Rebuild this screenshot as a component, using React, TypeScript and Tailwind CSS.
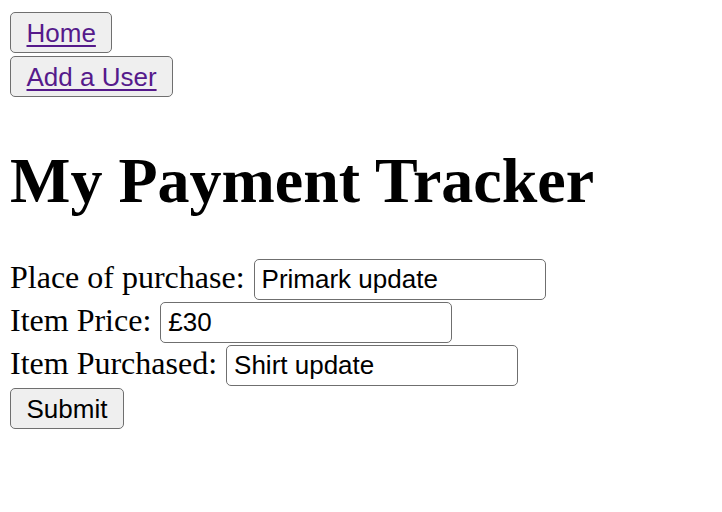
import React from "react";

const serif = { fontFamily: '"Liberation Serif", "Times New Roman", serif' };

function NavButton({ label }: { label: string }) {
  return (
    <button
      type="button"
      className="h-[41px] px-[15.5px] bg-[#efefef] border border-[#6f6f6f] rounded-[5px] text-[26px] leading-none font-['Liberation_Sans',Arial,sans-serif]"
    >
      <a href="#" className="text-[#551a8b] underline decoration-[2px] underline-offset-[3px]">
        {label}
      </a>
    </button>
  );
}

function Field({ label, value }: { label: string; value: string }) {
  return (
    <div className="flex items-center h-[41px]">
      <span className="text-[32px] leading-[32px] text-black whitespace-pre translate-y-[-3px]" style={serif}>
        {label}
      </span>
      <input
        type="text"
        defaultValue={value}
        className="ml-[9px] w-[292px] h-[41px] px-[7px] bg-white border border-[#6f6f6f] rounded-[5px] text-[26px] text-black font-['Liberation_Sans',Arial,sans-serif] outline-none"
      />
    </div>
  );
}

export default function App() {
  return (
    <div className="w-[722px] h-[512px] bg-white px-[10px] pt-[12px]">
      <div className="flex flex-col items-start gap-[3px]">
        <NavButton label="Home" />
        <NavButton label="Add a User" />
      </div>
      <h1 className="mt-[52px] text-[64px] leading-[64px] font-bold text-black" style={serif}>
        My Payment Tracker
      </h1>
      <form className="mt-[46px] flex flex-col items-start gap-[2px]" onSubmit={(e) => e.preventDefault()}>
        <Field label="Place of purchase:" value="Primark update" />
        <Field label="Item Price:" value="£30" />
        <Field label="Item Purchased:" value="Shirt update" />
        <button
          type="submit"
          className="h-[41px] px-[15.5px] bg-[#efefef] border border-[#6f6f6f] rounded-[5px] text-[26px] leading-none text-black font-['Liberation_Sans',Arial,sans-serif]"
        >
          Submit
        </button>
      </form>
    </div>
  );
}
